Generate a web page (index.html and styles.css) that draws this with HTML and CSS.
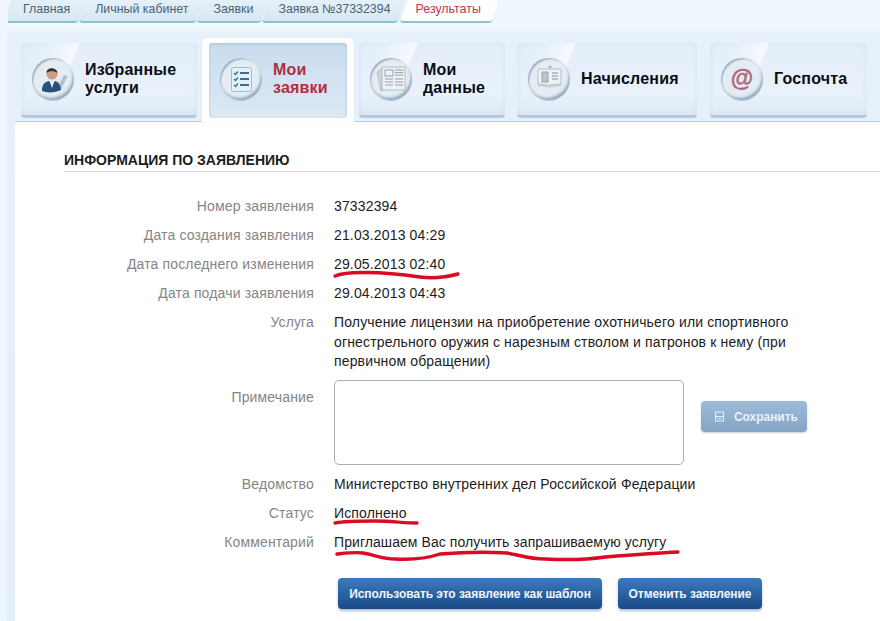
FILE: index.html
```html
<!DOCTYPE html>
<html lang="ru">
  <head>
    <meta charset="UTF-8" />
    <title>Информация по заявлению</title>
    <link rel="stylesheet" href="styles.css">
  </head>
  <body>
    <div class="breadcrumbs">
      <a class="crumb crumb-first">Главная</a>
      <a class="crumb">Личный кабинет</a>
      <a class="crumb">Заявки</a>
      <a class="crumb">Заявка №37332394</a>
      <a class="crumb crumb-current">Результаты</a>
    </div>

    <div class="panel">
      <div class="tabs">
        <a class="tab tab-favorites">
          <span class="tab-icon">
            <svg viewBox="0 0 42 42" width="42" height="42">
              <path d="M23 28 L29 31 L36 18 L32 17 L28 25 L25 23 Z" fill="#aac3d8" />
              <path d="M10 33 C10 26 13 24 17 23 L20 26 L23 23 C26 24 29 27 29 32 C23 35 15 35 10 33 Z" fill="#27527d" />
              <path d="M17.5 23 L20 30 L22.5 23 Z" fill="#e8eef3" />
              <circle cx="20" cy="16" r="5.5" fill="#c99f88" />
              <path d="M14.5 15 C14 8.5 25 8.5 25.5 15 C23 12.5 17 12.5 14.5 15 Z" fill="#333333" />
            </svg>
          </span>
          <span>Избранные<br />услуги</span>
        </a>
        <div class="tab-frame">
          <a class="tab tab-orders tab-active">
            <span class="tab-icon">
              <svg viewBox="0 0 42 42" width="42" height="42">
                <rect x="11.5" y="9.5" width="20" height="24" rx="2" fill="#e4f0f8" stroke="#9fbdd2" />
                <path d="M14 15 l1.5 1.5 l2.5 -3 M14 21 l1.5 1.5 l2.5 -3 M14 27 l1.5 1.5 l2.5 -3" fill="none" stroke="#2d6f96" stroke-width="1.3" />
                <path d="M20 15 h9 M20 21 h9 M20 27 h9" stroke="#3f6f92" stroke-width="2" />
              </svg>
            </span>
            <span>Мои<br />заявки</span>
          </a>
        </div>
        <a class="tab tab-data">
          <span class="tab-icon">
            <svg viewBox="0 0 42 42" width="42" height="42">
              <path d="M7 14 L14 9 L14 31 L11 33 Z" fill="#cfd6db" stroke="#a3adb5" stroke-width="0.6" />
              <rect x="12" y="9" width="23" height="23" fill="#eef1f3" stroke="#9aa6ae" stroke-width="0.7" />
              <path d="M15 12 h8 v6 h-8 Z M25 12 h8 M25 14.5 h8 M25 17 h8 M15 21 h8 M15 24 h8 M15 27 h8 M25 21 h8 M25 24 h8 M25 27 h8" fill="none" stroke="#8c979f" stroke-width="0.9" />
            </svg>
          </span>
          <span>Мои<br />данные</span>
        </a>
        <a class="tab tab-charges">
          <span class="tab-icon">
            <svg viewBox="0 0 42 42" width="42" height="42">
              <path d="M10 26 L21 27 L33 26 L33 11 L21 11 L10 11 Z" fill="#eef2f4" stroke="#a9b3ba" stroke-width="0.8" />
              <path d="M10 26 L21 27.5 L33 26 L33 28 L21 29.5 L10 28 Z" fill="#c2cdd4" />
              <rect x="14" y="14" width="6" height="10" fill="#bcc6cc" stroke="#7e8a92" stroke-width="0.7" />
              <path d="M24 15 h6 M24 18 h6 M24 21 h6" stroke="#87939b" stroke-width="1" />
              <circle cx="22" cy="9" r="1.6" fill="#aab5bc" />
            </svg>
          </span>
          <span>Начисления</span>
        </a>
        <a class="tab tab-mail">
          <span class="tab-icon tab-icon-mail">@</span>
          <span>Госпочта</span>
        </a>
      </div>

      <div class="content">
        <h2 class="section-title">ИНФОРМАЦИЯ ПО ЗАЯВЛЕНИЮ</h2>

        <div class="info-row">
          <div class="info-label">Номер заявления</div>
          <div class="info-value">37332394</div>
        </div>
        <div class="info-row">
          <div class="info-label">Дата создания заявления</div>
          <div class="info-value">21.03.2013 04:29</div>
        </div>
        <div class="info-row">
          <div class="info-label">Дата последнего изменения</div>
          <div class="info-value">29.05.2013 02:40</div>
        </div>
        <div class="info-row">
          <div class="info-label">Дата подачи заявления</div>
          <div class="info-value">29.04.2013 04:43</div>
        </div>
        <div class="info-row">
          <div class="info-label">Услуга</div>
          <div class="info-value info-value-long">
            Получение лицензии на приобретение охотничьего или спортивного
            огнестрельного оружия с нарезным стволом и патронов к нему (при
            первичном обращении)
          </div>
        </div>
        <div class="info-row">
          <div class="info-label note-label">Примечание</div>
          <div class="note-field">
            <textarea class="note-input"></textarea>
            <button class="save-button" type="button">
              <svg viewBox="0 0 11 11" width="11" height="11">
                <path d="M1.5 1 H9.5 V10 H1.5 Z M1.5 5.5 H9.5 M3.5 7.8 H7.5" fill="none" stroke="#e6edf5" stroke-width="1.1" />
              </svg>
              Сохранить
            </button>
          </div>
        </div>
        <div class="info-row">
          <div class="info-label">Ведомство</div>
          <div class="info-value">Министерство внутренних дел Российской Федерации</div>
        </div>
        <div class="info-row">
          <div class="info-label">Статус</div>
          <div class="info-value">Исполнено</div>
        </div>
        <div class="info-row">
          <div class="info-label">Комментарий</div>
          <div class="info-value info-value-tight">Приглашаем Вас получить запрашиваемую услугу</div>
        </div>

        <div class="actions">
          <button class="action-button action-template" type="button">Использовать это заявление как шаблон</button>
          <button class="action-button action-cancel" type="button">Отменить заявление</button>
        </div>
      </div>
    </div>

    <!-- red marker strokes drawn over the screenshot -->
    <svg class="scribbles" viewBox="0 0 880 621" width="880" height="621">
      <path d="M335 276 C342 273 350 272.5 362 272.5 C385 272 400 274 420 277 C435 279 447 277 458 274" />
      <path d="M335 523 C345 521 360 521 375 521 C390 521 405 523 417 523" />
      <path d="M337 554 C347 553 355 552 363 553 C375 555 383 559 395 559 C412 560 425 559 440 554 C465 552 490 552 507 553 C520 555 528 559 545 559 C565 560 585 560 605 557 C630 555 655 553 678 552" />
    </svg>
  </body>
</html>
```

FILE: styles.css
```css
html,
body {
  margin: 0;
  padding: 0;
  height: 621px;
  overflow: hidden;
  background-color: #f0f6fd;
  font-family: "Liberation Sans", Arial, sans-serif;
  color: #1c1c1c;
}

.breadcrumbs {
  display: flex;
  height: 23px;
  margin-left: 8px;
  width: 489px;
  overflow: hidden;
  font-size: 12.4px;
  line-height: 19px;
  color: #4a6378;
}

.crumb {
  position: relative;
  z-index: 0;
  padding: 0 12px 0 12px;
  margin-right: 1px;
  white-space: nowrap;
}

.crumb::before {
  content: "";
  position: absolute;
  z-index: -1;
  top: -2px;
  bottom: 0;
  left: 0;
  right: 0;
  background: linear-gradient(#e6f1f8, #d7e8f3);
  border-bottom: 2px solid #8fc3cb;
  border-radius: 0 0 4px 4px;
  box-shadow: 0 1px 1px #c7dbe5;
  transform: skewX(-20deg);
}

.crumb-first {
  padding-left: 15px;
}

.crumb-current {
  color: #c0364f;
  padding-right: 15px;
}

.crumb-current::before {
  background: #fdfefe;
}

.panel {
  margin: 8px 0 0 7px;
  height: 590px;
  background: linear-gradient(#e7f1fb, #e2eef8);
  border-radius: 5px 0 0 0;
}

.tabs {
  display: flex;
  align-items: flex-start;
  height: 91px;
  box-sizing: border-box;
  border-bottom: 1px solid #b9cfdd;
  margin-left: 8px;
  padding-left: 6px;
}

.tab {
  position: relative;
  display: flex;
  align-items: center;
  gap: 11px;
  height: 75px;
  margin-top: 12px;
  padding-left: 11px;
  box-sizing: border-box;
  background: linear-gradient(#e4eef8, #e9f2fb 70%, #dfeaf5);
  border-radius: 4px;
  border-bottom: 3px solid #b3c8da;
  box-shadow: inset 0 0 6px #d3e2f0;
  font-size: 16px;
  font-weight: bold;
  line-height: 18px;
  letter-spacing: 0.2px;
  color: #0c0c14;
}

.tab::before {
  content: "";
  position: absolute;
  top: 0;
  left: 0;
  width: 59px;
  height: 40px;
  background: linear-gradient(to right, #f6fafe00 35%, #f8fbfe);
  clip-path: polygon(0 0, 100% 0, 72% 100%, 0 100%);
}

.tab-favorites {
  width: 176px;
}

.tab-frame {
  display: flex;
  width: 152px;
  height: 85px;
  margin: 7px 5px 0;
  padding: 5px 7px;
  box-sizing: border-box;
  background-color: #ffffff;
  border-radius: 5px 5px 0 0;
  box-shadow: 0 0 1px #b9cfdd;
  position: relative;
}

.tab-active {
  width: 138px;
  margin-top: 0;
  padding-bottom: 3px;
  background: linear-gradient(#c9dcee, #dce9f5);
  border-bottom: none;
  box-shadow: inset 0 1px 3px #a9c1d6;
  color: #b12e41;
}

.tab-active::before {
  display: none;
}

.tab-data {
  width: 146px;
}

.tab-charges {
  width: 180px;
  margin-left: 12px;
}

.tab-mail {
  width: 157px;
  margin-left: 13px;
}

.tab-icon {
  position: relative;
  flex: none;
  width: 42px;
  height: 42px;
  border-radius: 50%;
  background: radial-gradient(circle at 50% 50%, #e4edf4 0 66%, #ffffff 78%, #d5e0e9 100%);
  box-shadow: inset 2px 2px 2px -1px #93a8ba, inset -2px -3px 3px -1px #8fa5b8, 0 1px 1px #b6c8d6;
}

.tab-icon svg {
  display: block;
}

.tab-icon-mail {
  text-align: center;
  font-size: 23px;
  line-height: 40px;
  letter-spacing: 0;
  -webkit-text-stroke: 0.4px #b06a7e;
  color: #b06a7e;
}

.content {
  margin-left: 8px;
  padding: 27px 0 0 49px;
  height: 490px;
  background-color: #ffffff;
  font-size: 14px;
  line-height: 19.5px;
  letter-spacing: 0.15px;
}

.section-title {
  margin: 0 0 25px;
  border-bottom: 1px solid #d9dde0;
  font-size: 14px;
  line-height: 22px;
  letter-spacing: 0;
  font-weight: bold;
  color: #1c1c1c;
}

.info-row {
  display: grid;
  grid-template-columns: 250px 1fr;
  column-gap: 20px;
  margin-bottom: 9.5px;
}

.info-label {
  text-align: right;
  letter-spacing: 0.15px;
  color: #858585;
}

.info-value-long {
  width: 490px;
}

.info-value-tight {
  letter-spacing: 0.07px;
}

.note-label {
  padding-top: 7px;
}

.note-field {
  display: flex;
  align-items: flex-start;
  gap: 17px;
  margin-top: -1px;
}

.note-input {
  display: block;
  width: 350px;
  height: 85px;
  box-sizing: border-box;
  border: 1px solid #a3b1bc;
  border-radius: 5px;
  resize: none;
}

.save-button {
  display: flex;
  align-items: center;
  gap: 9px;
  width: 106px;
  height: 31px;
  margin-top: 21px;
  padding: 0 0 0 13px;
  border: none;
  border-radius: 4px;
  background: linear-gradient(#9ebbd9, #84a4c6);
  box-shadow: 0 1px 2px #c4cfda;
  font-family: inherit;
  font-size: 12px;
  font-weight: bold;
  letter-spacing: -0.05px;
  color: #eaf1f8;
}

.actions {
  display: flex;
  gap: 16px;
  margin: 26px 0 0 274px;
}

.action-button {
  height: 31px;
  padding: 0;
  border: none;
  border-radius: 4px;
  background: linear-gradient(#3a7cc0, #1a4a85);
  box-shadow: 0 2px 3px #a9bdd0;
  font-family: inherit;
  font-size: 12px;
  font-weight: bold;
  letter-spacing: -0.07px;
  color: #f1f5fa;
}

.action-template {
  width: 264px;
}

.action-cancel {
  width: 144px;
}

.scribbles {
  position: absolute;
  top: 0;
  left: 0;
  pointer-events: none;
}

.scribbles path {
  fill: none;
  stroke: #dc0a23;
  stroke-width: 3.4;
  stroke-linecap: round;
}
```
